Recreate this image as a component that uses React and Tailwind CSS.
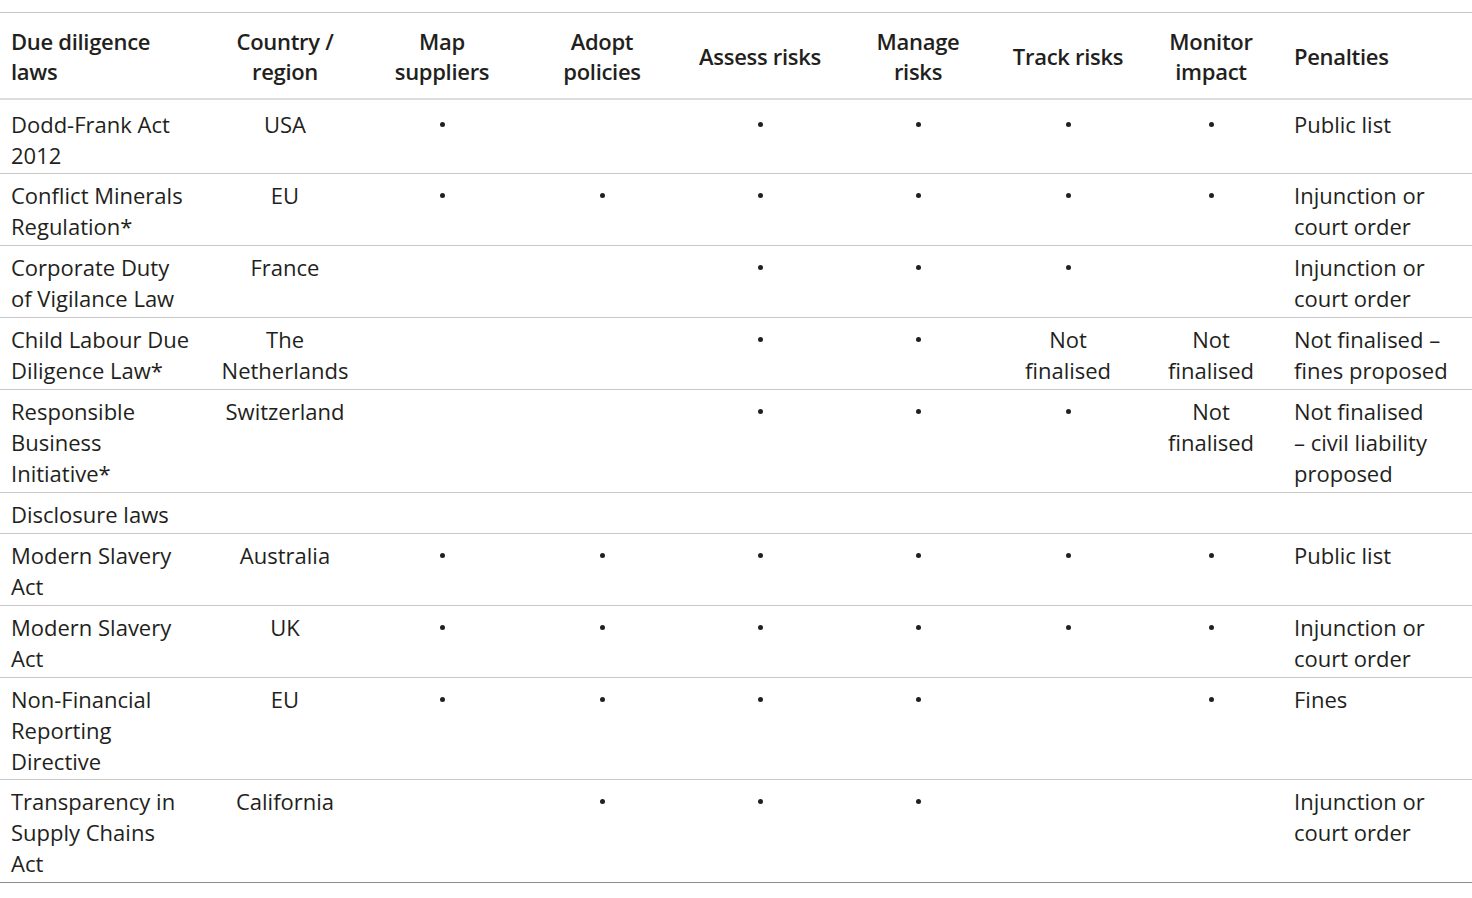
import React from "react";

const cols =
  "grid grid-cols-[210px_150px_164px_156px_160px_156px_144px_142px_190px]";

const headers = [
  ["Due diligence", "laws"],
  ["Country /", "region"],
  ["Map", "suppliers"],
  ["Adopt", "policies"],
  ["Assess risks"],
  ["Manage", "risks"],
  ["Track risks"],
  ["Monitor", "impact"],
  ["Penalties"],
];

// x = dot, array = lines of text, null = empty
const rows = [
  [["Dodd-Frank Act", "2012"], ["USA"], "x", null, "x", "x", "x", "x", ["Public list"]],
  [["Conflict Minerals", "Regulation*"], ["EU"], "x", "x", "x", "x", "x", "x", ["Injunction or", "court order"]],
  [["Corporate Duty", "of Vigilance Law"], ["France"], null, null, "x", "x", "x", null, ["Injunction or", "court order"]],
  [["Child Labour Due", "Diligence Law*"], ["The", "Netherlands"], null, null, "x", "x", ["Not", "finalised"], ["Not", "finalised"], ["Not finalised –", "fines proposed"]],
  [["Responsible", "Business", "Initiative*"], ["Switzerland"], null, null, "x", "x", "x", ["Not", "finalised"], ["Not finalised", "– civil liability", "proposed"]],
  [["Disclosure laws"], null, null, null, null, null, null, null, null],
  [["Modern Slavery", "Act"], ["Australia"], "x", "x", "x", "x", "x", "x", ["Public list"]],
  [["Modern Slavery", "Act"], ["UK"], "x", "x", "x", "x", "x", "x", ["Injunction or", "court order"]],
  [["Non-Financial", "Reporting", "Directive"], ["EU"], "x", "x", "x", "x", null, "x", ["Fines"]],
  [["Transparency in", "Supply Chains", "Act"], ["California"], null, "x", "x", "x", null, null, ["Injunction or", "court order"]],
];

const Lines = ({ lines }) => (
  <>
    {lines.map((l, i) => (
      <div key={i} className="whitespace-nowrap">
        {l}
      </div>
    ))}
  </>
);

const Cell = ({ value, idx }) => {
  const align =
    idx === 0 ? "pl-[11px] text-left" : idx === 8 ? "pl-[12px] text-left" : "text-center";
  return (
    <div className={align}>
      {value === "x" ? (
        <div className="h-[31px] flex items-center justify-center">
          <span className="inline-block w-[5px] h-[5px] rounded-full bg-[#231f20]" />
        </div>
      ) : value ? (
        <Lines lines={value} />
      ) : null}
    </div>
  );
};

export default function App() {
  return (
    <div
      className="w-[1472px] h-[898px] bg-white pt-[12px] text-[#231f20] text-[22px] leading-[31px]"
      style={{ fontFamily: '"Open Sans", sans-serif' }}
    >
      <div className="border-t border-[#c6c6c6]">
        <div className={`${cols} h-[87px] items-center border-b-2 border-[#dcdcdc] font-semibold leading-[30px] tracking-[-0.3px]`}>
          {headers.map((h, i) => (
            <div
              key={i}
              className={
                i === 0 ? "pl-[11px] text-left" : i === 8 ? "pl-[12px] text-left" : "text-center"
              }
            >
              <Lines lines={h} />
            </div>
          ))}
        </div>
        {rows.map((r, ri) => (
          <div
            key={ri}
            className={`${cols} border-b ${
              ri === 0 ? "pt-[9px] pb-[2px]" : ri === 8 ? "pt-[6px] pb-[2px]" : "pt-[6px] pb-[3px]"
            } ${ri === rows.length - 1 ? "border-[#8c8c8c]" : "border-[#c8c8c8]"}`}
          >
            {r.map((v, ci) => (
              <Cell key={ci} value={v} idx={ci} />
            ))}
          </div>
        ))}
      </div>
    </div>
  );
}
